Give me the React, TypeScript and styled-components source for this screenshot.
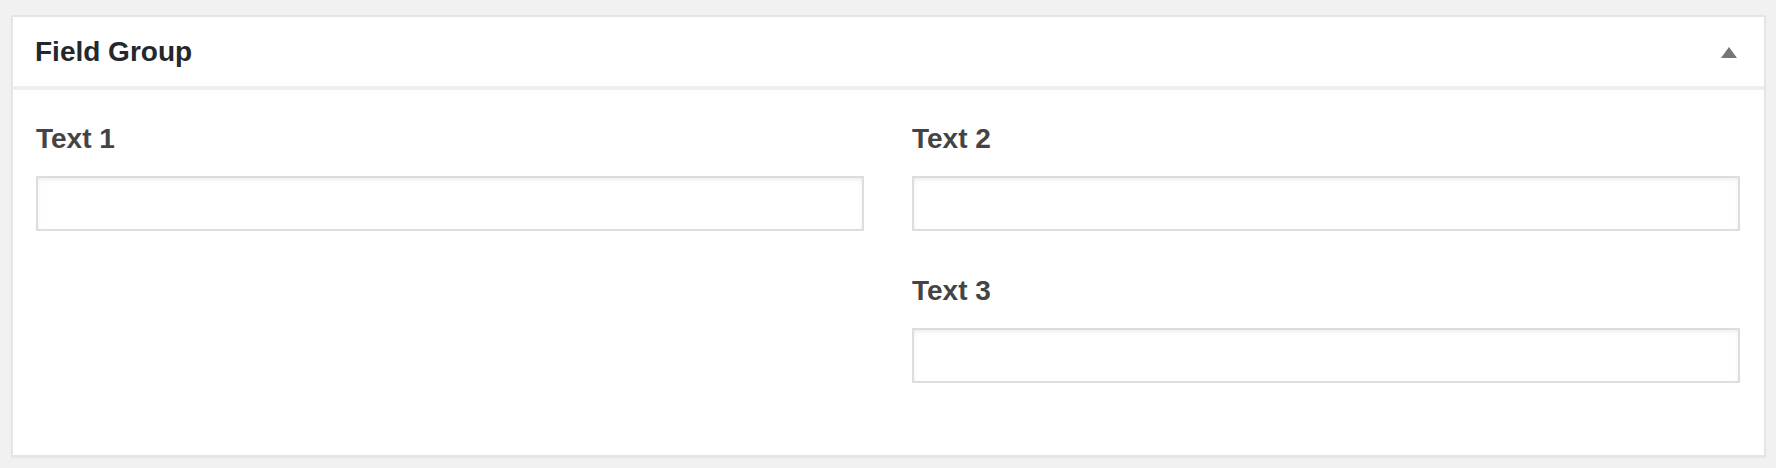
import { FC } from "react"
import styled, { createGlobalStyle } from "styled-components"

const Global = createGlobalStyle`
body{
  margin: 0;
  background: #f1f1f1;
  font-family: "Liberation Sans", Arial, sans-serif;
}
`

const Page = styled.div`
padding: 15px 10px 11px 11px;
`

const Postbox = styled.section`
background: #fff;
border: 2px solid #e5e5e5;
box-shadow: 0 1px 1px rgba(0,0,0,.04);
`

const Header = styled.div`
display: flex;
align-items: center;
justify-content: space-between;
height: 69px;
padding: 0 27px 0 22px;
border-bottom: 4px solid #eeeeee;
.title{
  font: 700 28px/28px "Liberation Sans", Arial, sans-serif;
  color: #23282d;
  margin: 0;
}
.toggle{
  width: 0;
  height: 0;
  border-left: 8.5px solid transparent;
  border-right: 8.5px solid transparent;
  border-bottom: 11px solid #72777c;
  margin-top: 2px;
}
`

const Fields = styled.div`
display: grid;
grid-template-columns: 828px 828px;
column-gap: 48px;
row-gap: 46px;
padding: 35px 24px 72px 23px;
`

const Field = styled.div<{ $column: number; $row: number }>`
grid-column: ${p => p.$column};
grid-row: ${p => p.$row};
display: flex;
flex-direction: column;
gap: 23px;
label{
  font: 700 28px/28px "Liberation Sans", Arial, sans-serif;
  color: #444;
}
input{
  box-sizing: border-box;
  width: 100%;
  height: 55px;
  margin: 0;
  border: 2px solid #dddddd;
  background: #fff;
  box-shadow: inset 0 2px 4px rgba(0,0,0,.07);
  font: 400 28px "Liberation Sans", Arial, sans-serif;
  padding: 0 8px;
  outline: none;
}
`

const fields = [
  { label: "Text 1", column: 1, row: 1 },
  { label: "Text 2", column: 2, row: 1 },
  { label: "Text 3", column: 2, row: 2 },
]

const App: FC = () => {
  return (
    <Page>
      <Global />
      <Postbox>
        <Header>
          <h2 className="title">Field Group</h2>
          <span className="toggle" />
        </Header>
        <Fields>
          {fields.map(f => (
            <Field key={f.label} $column={f.column} $row={f.row}>
              <label>{f.label}</label>
              <input type="text" />
            </Field>
          ))}
        </Fields>
      </Postbox>
    </Page>
  )
}

export default App
